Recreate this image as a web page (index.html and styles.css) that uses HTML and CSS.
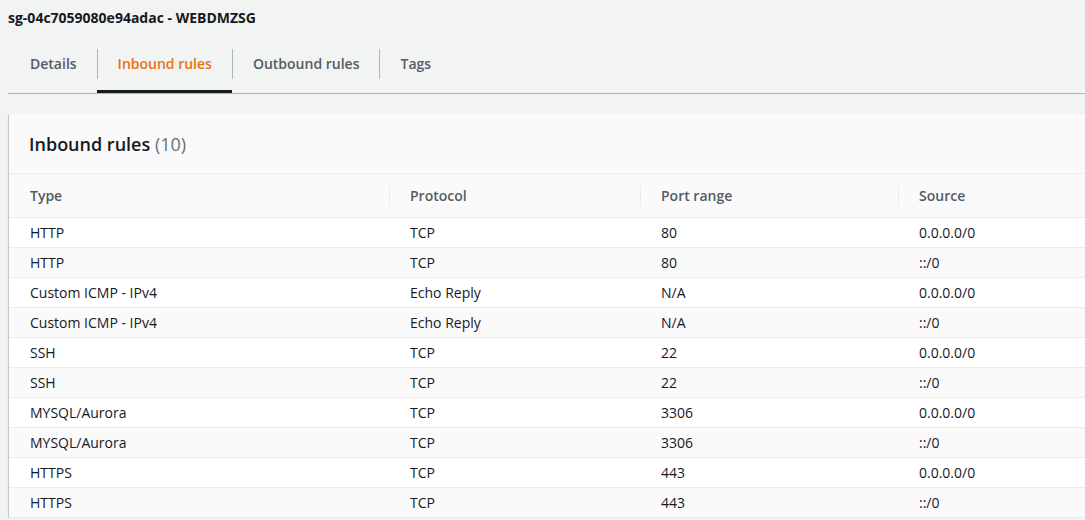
FILE: index.html
```html
<!DOCTYPE html>
<html lang="en">
<head>
<meta charset="utf-8">
<title>Security group - Inbound rules</title>
<link rel="stylesheet" href="styles.css">
</head>
<body>
<div class="page">
  <h1 class="sg-title">sg-04c7059080e94adac - WEBDMZSG</h1>
  <div class="tabs">
    <div class="tab first"><span class="tab-label">Details</span></div>
    <div class="tab active"><span class="tab-label">Inbound rules</span></div>
    <div class="tab"><span class="tab-label">Outbound rules</span></div>
    <div class="tab"><span class="tab-label">Tags</span></div>
  </div>
  <div class="card">
    <div class="card-header">
      <h2 class="card-title">Inbound rules <span class="count">(10)</span></h2>
    </div>
    <div class="table">
      <div class="row head">
        <div class="cell">Type</div>
        <div class="cell sep">Protocol</div>
        <div class="cell sep">Port range</div>
        <div class="cell sep">Source</div>
      </div>
      <div class="row"><div class="cell">HTTP</div><div class="cell">TCP</div><div class="cell">80</div><div class="cell">0.0.0.0/0</div></div>
      <div class="row"><div class="cell">HTTP</div><div class="cell">TCP</div><div class="cell">80</div><div class="cell">::/0</div></div>
      <div class="row"><div class="cell">Custom ICMP - IPv4</div><div class="cell">Echo Reply</div><div class="cell">N/A</div><div class="cell">0.0.0.0/0</div></div>
      <div class="row"><div class="cell">Custom ICMP - IPv4</div><div class="cell">Echo Reply</div><div class="cell">N/A</div><div class="cell">::/0</div></div>
      <div class="row"><div class="cell">SSH</div><div class="cell">TCP</div><div class="cell">22</div><div class="cell">0.0.0.0/0</div></div>
      <div class="row"><div class="cell">SSH</div><div class="cell">TCP</div><div class="cell">22</div><div class="cell">::/0</div></div>
      <div class="row"><div class="cell">MYSQL/Aurora</div><div class="cell">TCP</div><div class="cell">3306</div><div class="cell">0.0.0.0/0</div></div>
      <div class="row"><div class="cell">MYSQL/Aurora</div><div class="cell">TCP</div><div class="cell">3306</div><div class="cell">::/0</div></div>
      <div class="row"><div class="cell">HTTPS</div><div class="cell">TCP</div><div class="cell">443</div><div class="cell">0.0.0.0/0</div></div>
      <div class="row"><div class="cell">HTTPS</div><div class="cell">TCP</div><div class="cell">443</div><div class="cell">::/0</div></div>
    </div>
  </div>
</div>
</body>
</html>
```
FILE: styles.css
```css
html, body {
  margin: 0;
  padding: 0;
  background: #f2f3f3;
  overflow: hidden;
}

body {
  font-family: "Open Sans", "Liberation Sans", sans-serif;
  font-size: 14px;
  color: #16191f;
}

.page {
  padding-left: 8px;
}

.sg-title {
  margin: 8px 0 0;
  font-size: 14px;
  line-height: 20px;
  font-weight: 700;
  color: #16191f;
}

.tabs {
  display: flex;
  margin-top: 17px;
  border-bottom: 1px solid #aab7b8;
}

.tab {
  display: flex;
  padding-top: 4px;
  border-bottom: 3px solid transparent;
  font-weight: 600;
  color: #545b64;
}

.tab-label {
  height: 30px;
  line-height: 30px;
  padding: 0 20px;
  margin-bottom: 11px;
  border-left: 1px solid #aab7b8;
}

.tab.first .tab-label {
  border-left-color: transparent;
  padding-left: 21px;
}

.tab.active {
  border-bottom-color: #16191f;
  color: #ec7211;
}

.card {
  margin: 20px 0 0 1px;
  width: 1150px;
  background: #ffffff;
  box-shadow: 0 1px 1px 0 rgba(0, 28, 36, 0.3), 1px 1px 1px 0 rgba(0, 28, 36, 0.15), -1px 1px 1px 0 rgba(0, 28, 36, 0.15);
}

.card-header {
  background: #fafafa;
  padding: 18px 20px 17px;
  border-bottom: 1px solid #eaeded;
}

.card-title {
  margin: 0;
  font-size: 18px;
  line-height: 24px;
  font-weight: 600;
  color: #16191f;
}

.count {
  font-weight: 400;
  color: #687078;
}

.row {
  display: grid;
  grid-template-columns: 380px 251px 258px 1fr;
  border-bottom: 1px solid #eaeded;
  background: #ffffff;
}

.row:nth-child(odd):not(.head) {
  background: #fafafa;
}

.cell {
  padding-left: 21px;
  line-height: 29px;
  white-space: nowrap;
}

.row.head {
  background: #fafafa;
  height: 42px;
  align-items: center;
  font-weight: 600;
  color: #545b64;
  padding-top: 1px;
}

.row.head .cell {
  line-height: 20px;
}

.row.head .cell.sep {
  border-left: 1px solid #eaeded;
  padding-left: 20px;
}
```
